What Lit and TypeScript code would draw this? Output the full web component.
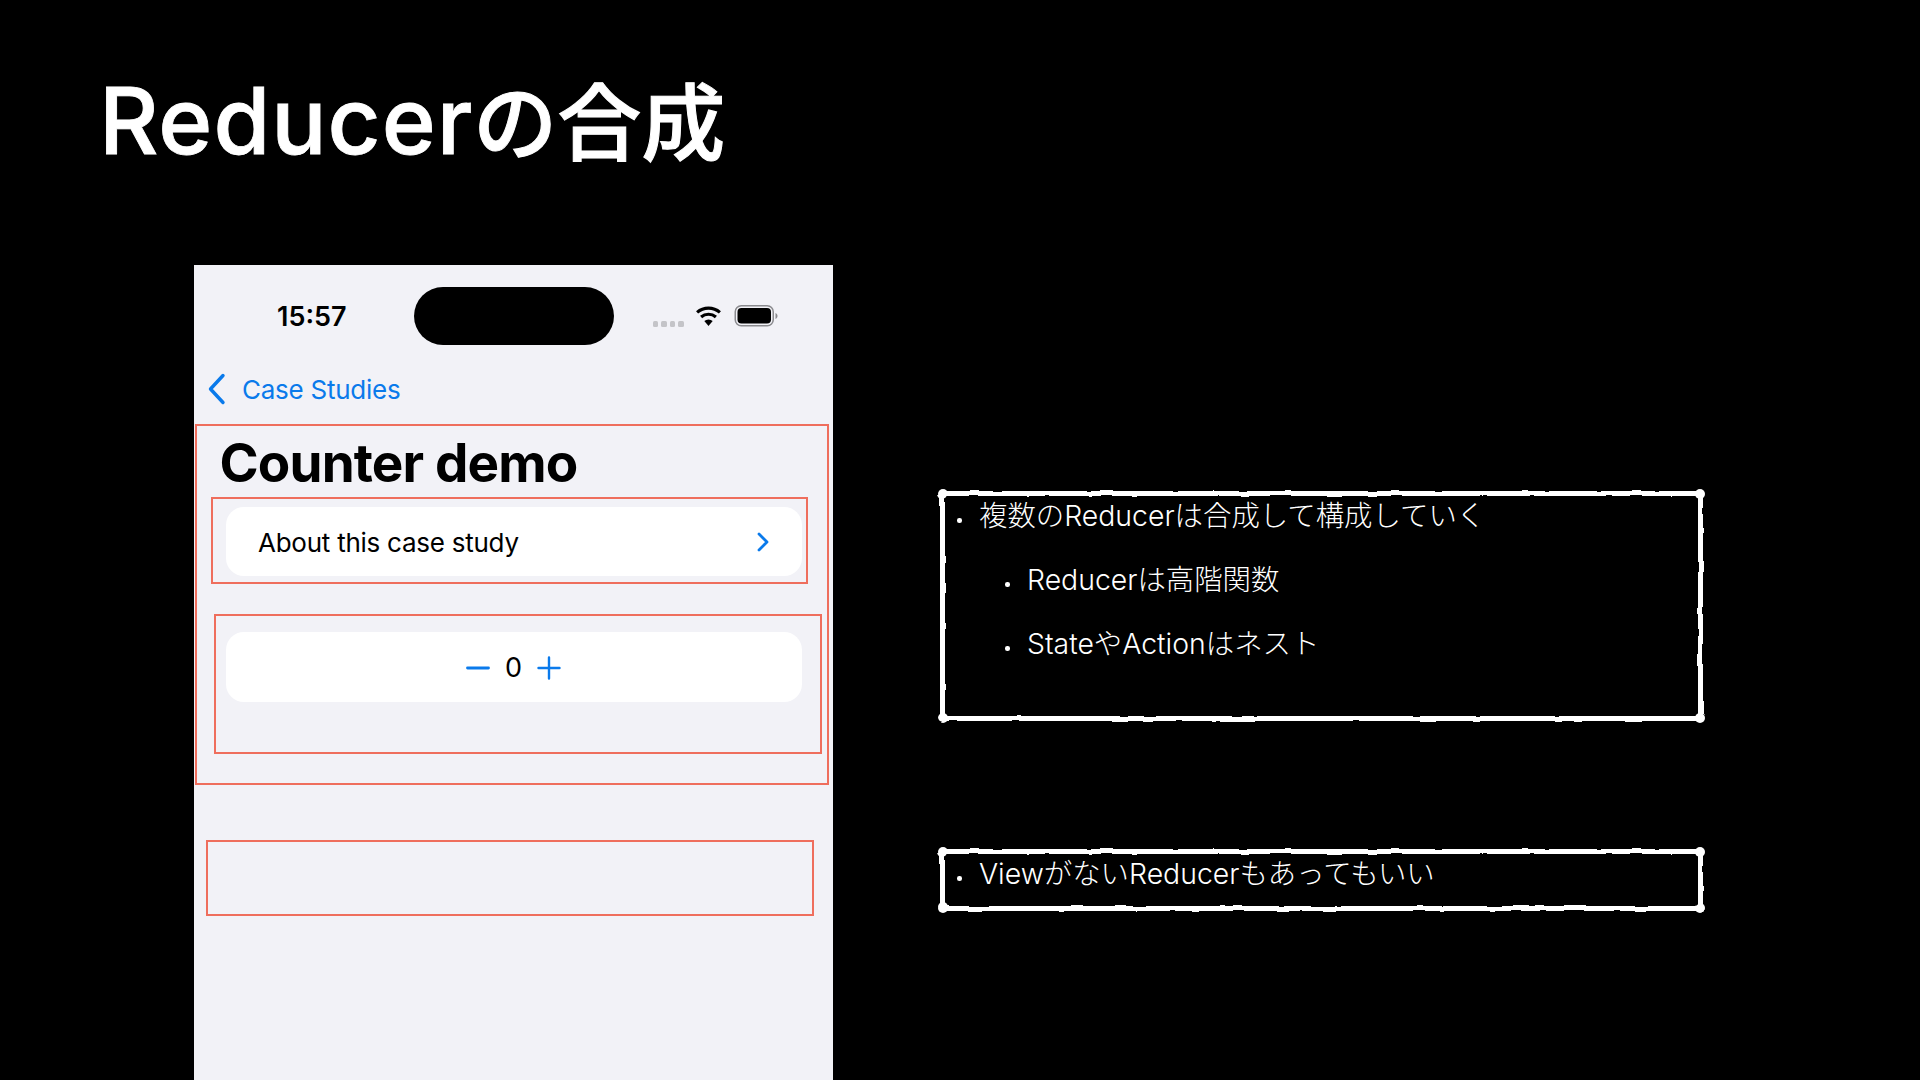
import { LitElement, html, css } from "lit";
import { customElement } from "lit/decorators.js";

@customElement("app-root")
export class AppRoot extends LitElement {
  static styles = css`
    :host { display: block; width: 1920px; height: 1080px; overflow: hidden; background: #000; color: #fff; font-family: Inter, "Noto Sans CJK JP", sans-serif; }
    .filters { width: 0; height: 0; display: block; }
    .slide { display: flex; flex-direction: column; height: 1080px; box-sizing: border-box; padding: 71px 0 0 99px; }
    h1 { margin: 0; font-size: 92px; line-height: 100px; font-weight: 500; height: 91px; white-space: nowrap; letter-spacing: 1px; -webkit-text-stroke: 0.8px #fff; }
    h1 span { font-size: 84px; font-weight: 500; letter-spacing: 0; -webkit-text-stroke: 1px #fff; }
    .content { display: flex; margin-top: 102.5px; padding-left: 95px; flex: 1; min-height: 0; }
    .phone { position: relative; width: 639px; background: #f2f2f7; color: #000; font-family: Inter, "Liberation Sans", sans-serif; flex: none; padding: 0 31.5px; box-sizing: border-box; display: flex; flex-direction: column; }
    .status { position: relative; display: flex; align-items: center; height: 59px; margin: 22px -31.5px 0; padding: 0 0 0 83px; }
    .time { font-size: 27px; font-weight: 600; width: 137px; flex: none; }
    .island { width: 200px; height: 58px; border-radius: 29px; background: #000; flex: none; }
    .indicators { display: flex; align-items: center; margin-left: 38.5px; flex: none; }
    .dots { display: flex; gap: 3px; margin-top: 15px; margin-right: 11px; }
    .dots i { width: 5.5px; height: 6px; background: #c4c4c8; border-radius: 1.5px; }
    .wifi { display: block; width: 27px; height: 20px; margin-right: 12px; }
    .battery { display: block; width: 45px; height: 22px; }
    .nav { display: flex; align-items: center; margin: 23.5px -19.5px 0; height: 40px; color: #0a7aeb; font-size: 26px; letter-spacing: -0.25px; }
    .nav svg { width: 19px; height: 32px; margin-right: 16px; margin-left: 1px; }
    h2 { margin: 22.5px 0 0 -6px; font-size: 53px; font-weight: 700; line-height: 62px; letter-spacing: -0.85px; }
    .card { background: #fff; border-radius: 18px; height: 69.5px; display: flex; align-items: center; flex: none; box-sizing: border-box; padding-top: 2px; }
    .about { margin-top: 13px; padding-left: 32.5px; padding-right: 33px; justify-content: space-between; font-size: 26px; letter-spacing: -0.25px; }
    .about svg { width: 12px; height: 20px; display: block; }
    .counter { margin-top: 56px; justify-content: center; font-size: 27px; gap: 15px; }
    .counter svg { width: 24px; height: 24px; display: block; color: #0a7aeb; }
    .mark { position: absolute; box-sizing: border-box; border: 2.5px solid #ef6e5d; pointer-events: none; }
    .m1 { left: 1px; top: 159px; width: 634px; height: 361px; }
    .m2 { left: 17px; top: 232px; width: 597px; height: 87px; }
    .m3 { left: 20px; top: 349px; width: 608px; height: 140px; }
    .m4 { left: 12px; top: 575px; width: 608px; height: 76px; }
    .notes { display: flex; flex-direction: column; margin-left: 107px; width: 763px; font-family: Inter, "Noto Sans CJK JP", sans-serif; font-weight: 300; font-size: 28.4px; flex: none; margin-top: 226px; }
    .box { position: relative; box-sizing: border-box; padding: 0 0 0 39px; }
    .box.one { height: 230px; }
    .box.two { height: 62px; margin-top: 128px; }
    .frame { position: absolute; inset: 0; border: 5.5px solid #fff; border-radius: 4px; filter: url(#rough); box-sizing: border-box; }
    .frame i { position: absolute; width: 10px; height: 10px; border-radius: 50%; background: #fff; }
    .frame i:nth-child(1) { left: -7px; top: -7px; }
    .frame i:nth-child(2) { right: -7px; top: -7px; }
    .frame i:nth-child(3) { left: -7px; bottom: -7px; }
    .frame i:nth-child(4) { right: -7px; bottom: -7px; }
    ul { list-style: none; margin: 0; padding: 0; position: relative; }
    li { position: relative; height: 64px; line-height: 40px; white-space: nowrap; }
    li::before { content: ""; position: absolute; left: -22px; top: 22px; width: 4.5px; height: 4.5px; border-radius: 50%; background: #fff; }
    li.sub { margin-left: 48px; }
    .one ul, .two ul { padding-top: 5.5px; }
  `;

  render() {
    return html`
      <svg class="filters" aria-hidden="true">
        <filter id="rough" x="-2%" y="-8%" width="104%" height="116%">
          <feTurbulence type="fractalNoise" baseFrequency="0.045" numOctaves="2" seed="4"></feTurbulence>
          <feDisplacementMap in="SourceGraphic" scale="3" xChannelSelector="R" yChannelSelector="G"></feDisplacementMap>
        </filter>
      </svg>
      <div class="slide">
        <h1>Reducer<span>の合成</span></h1>
        <div class="content">
          <div class="phone">
            <div class="status">
              <span class="time">15:57</span>
              <div class="island"></div>
              <div class="indicators">
                <div class="dots"><i></i><i></i><i></i><i></i></div>
                <svg class="wifi" viewBox="0 0 26 20">
                  <path d="M13 20l-4.2-5a6.4 6.4 0 0 1 8.4 0z" fill="#000"></path>
                  <path d="M5.6 11a11.400 11.400 0 0 1 14.800 0" fill="none" stroke="#000" stroke-width="3.2"></path>
                  <path d="M1.6 6.4a17.600 17.600 0 0 1 22.800 0" fill="none" stroke="#000" stroke-width="3.2"></path>
                </svg>
                <svg class="battery" viewBox="0 0 44 22">
                  <rect x=".75" y=".75" width="38" height="20" rx="6" fill="none" stroke="#8a8a8e" stroke-width="1.5"></rect>
                  <rect x="3" y="3" width="33.500" height="15.600" rx="4" fill="#000"></rect>
                  <path d="M41 8v6c1.200-.5 2-1.600 2-3s-.8-2.500-2-3z" fill="#8a8a8e"></path>
                </svg>
              </div>
            </div>
            <div class="nav">
              <svg viewBox="0 0 19 32"><path d="M16 2.500 3.500 16 16 29.500" fill="none" stroke="currentColor" stroke-width="3.400" stroke-linecap="round" stroke-linejoin="round"></path></svg>
              <span>Case Studies</span>
            </div>
            <h2>Counter demo</h2>
            <div class="card about">
              <span>About this case study</span>
              <svg viewBox="0 0 12 20"><path d="M2 2l8 8-8 8" fill="none" stroke="#0a7aeb" stroke-width="2.800" stroke-linecap="round" stroke-linejoin="round"></path></svg>
            </div>
            <div class="card counter">
              <svg viewBox="0 0 24 24"><path d="M1.500 12h21" stroke="currentColor" stroke-width="2.800" stroke-linecap="round"></path></svg>
              <span>0</span>
              <svg viewBox="0 0 24 24"><path d="M1.500 12h21M12 1.500v21" stroke="currentColor" stroke-width="2.400" stroke-linecap="round"></path></svg>
            </div>
            <div class="mark m1"></div>
            <div class="mark m2"></div>
            <div class="mark m3"></div>
            <div class="mark m4"></div>
          </div>
          <div class="notes">
            <div class="box one">
              <div class="frame"><i></i><i></i><i></i><i></i></div>
              <ul>
                <li>複数のReducerは合成して構成していく</li>
                <li class="sub">Reducerは高階関数</li>
                <li class="sub">StateやActionはネスト</li>
              </ul>
            </div>
            <div class="box two">
              <div class="frame"><i></i><i></i><i></i><i></i></div>
              <ul><li>ViewがないReducerもあってもいい</li></ul>
            </div>
          </div>
        </div>
      </div>
    `;
  }
}
